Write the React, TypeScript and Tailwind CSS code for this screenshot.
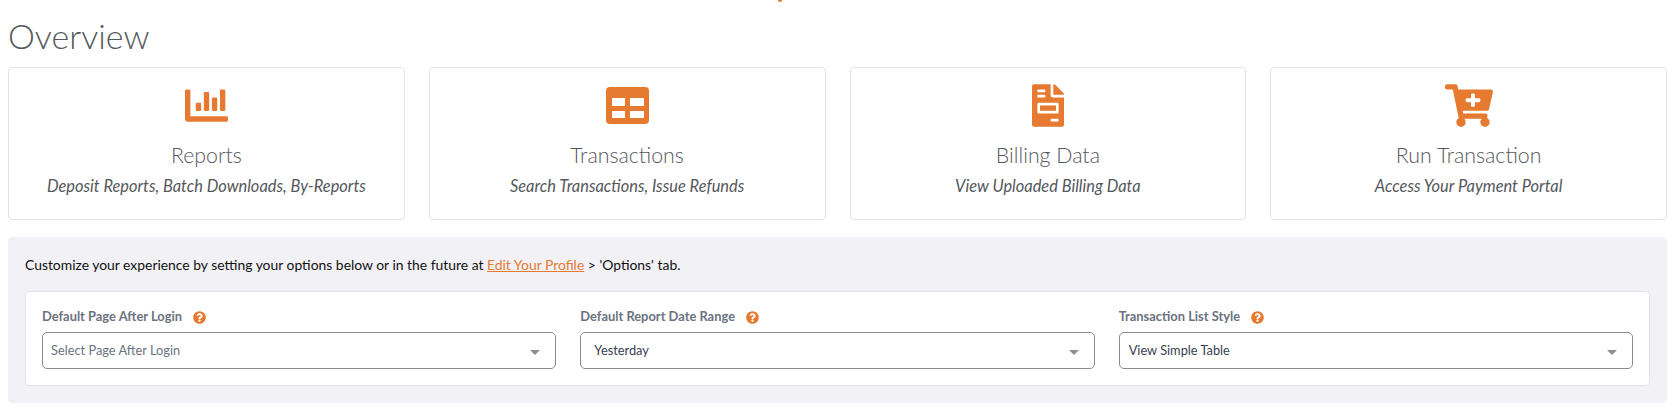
import React from "react";
import { FaChartBar, FaFileInvoice, FaCartPlus, FaQuestionCircle } from "react-icons/fa";

function TableIcon() {
  return (
    <svg width="43" height="37" viewBox="0 0 43 37" className="mt-[3px] text-[#e67a30]">
      <path
        fill="currentColor"
        fillRule="evenodd"
        d="M4 0h35a4 4 0 0 1 4 4v29a4 4 0 0 1-4 4H4a4 4 0 0 1-4-4V4a4 4 0 0 1 4-4ZM6 11v8h13v-8H6Zm18 0v8h14v-8H24ZM6 24v7h13v-7H6Zm18 0v7h14v-7H24Z"
      />
    </svg>
  );
}

const cards = [
  { title: "Reports", sub: "Deposit Reports, Batch Downloads, By-Reports", icon: <FaChartBar className="w-[43px] h-[43px] text-[#e67a30]" /> },
  { title: "Transactions", sub: "Search Transactions, Issue Refunds", icon: <TableIcon /> },
  { title: "Billing Data", sub: "View Uploaded Billing Data", icon: <FaFileInvoice className="w-[32px] h-[43px] text-[#e67a30]" /> },
  { title: "Run Transaction", sub: "Access Your Payment Portal", icon: <FaCartPlus className="w-[48px] h-[43px] text-[#e67a30]" /> },
];

const fields = [
  { label: "Default Page After Login", value: "Select Page After Login", cls: "pl-[8px] text-[#6b7280]" },
  { label: "Default Report Date Range", value: "Yesterday", cls: "pl-[13px] text-[#374151]" },
  { label: "Transaction List Style", value: "View Simple Table", cls: "pl-[9px] text-[#374151]" },
];

export default function App() {
  return (
    <div className="relative w-[1677px] h-[416px] overflow-hidden bg-white pl-2 pr-[10px] font-['Lato',sans-serif]">
      <div className="absolute left-[778px] top-0 w-[4px] h-[2px] rounded-b-full bg-[#e67a30]" />
      <h1 className="pt-[16px] h-[67px] text-[34px] leading-[40px] font-light text-[#55585c]">Overview</h1>
      <div className="grid grid-cols-4 gap-[24px]">
        {cards.map((c) => (
          <div key={c.title} className="h-[153px] rounded-[4px] border border-[#e2e3e6] bg-white flex flex-col items-center">
            <div className="h-[55px] mt-[16px] flex items-start justify-center">{c.icon}</div>
            <div className="text-[21.3px] leading-[28px] font-light text-[#55585c] mt-[2px]">{c.title}</div>
            <div className="text-[16.4px] leading-[22px] italic text-[#55585c] mt-[6px]">{c.sub}</div>
          </div>
        ))}
      </div>
      <div className="mt-[17px] h-[166px] rounded-[4px] bg-[#f1f1f6] pl-[17px] pr-[17px] pt-[18px]">
        <p className="text-[13.9px] leading-[20px] text-[#111]">
          Customize your experience by setting your options below or in the future at{" "}
          <a className="text-[#e67a30] underline">Edit Your Profile</a> &gt; 'Options' tab.
        </p>
        <div className="mt-[16px] h-[95px] rounded-[4px] border border-[#e2e3e6] bg-white px-[16px] pt-[15px] grid grid-cols-3 gap-[24px]">
          {fields.map((f) => (
            <div key={f.label}>
              <div className="flex items-center h-[20px] gap-[11px]">
                <span className="text-[12.9px] font-bold text-[#6b7280]">{f.label}</span>
                <FaQuestionCircle className="w-[13px] h-[13px] text-[#e67a30]" />
              </div>
              <div className="mt-[5px] h-[37px] rounded-[5px] border border-[#8a8a8f] bg-white flex items-center justify-between pr-[15px]">
                <span className={`text-[12.8px] leading-[16px] -mt-[2px] ${f.cls}`}>{f.value}</span>
                <span className="w-0 h-0 border-l-[5px] border-r-[5px] border-t-[5px] border-l-transparent border-r-transparent border-t-[#8f8f8f] mt-[4px]" />
              </div>
            </div>
          ))}
        </div>
      </div>
    </div>
  );
}
